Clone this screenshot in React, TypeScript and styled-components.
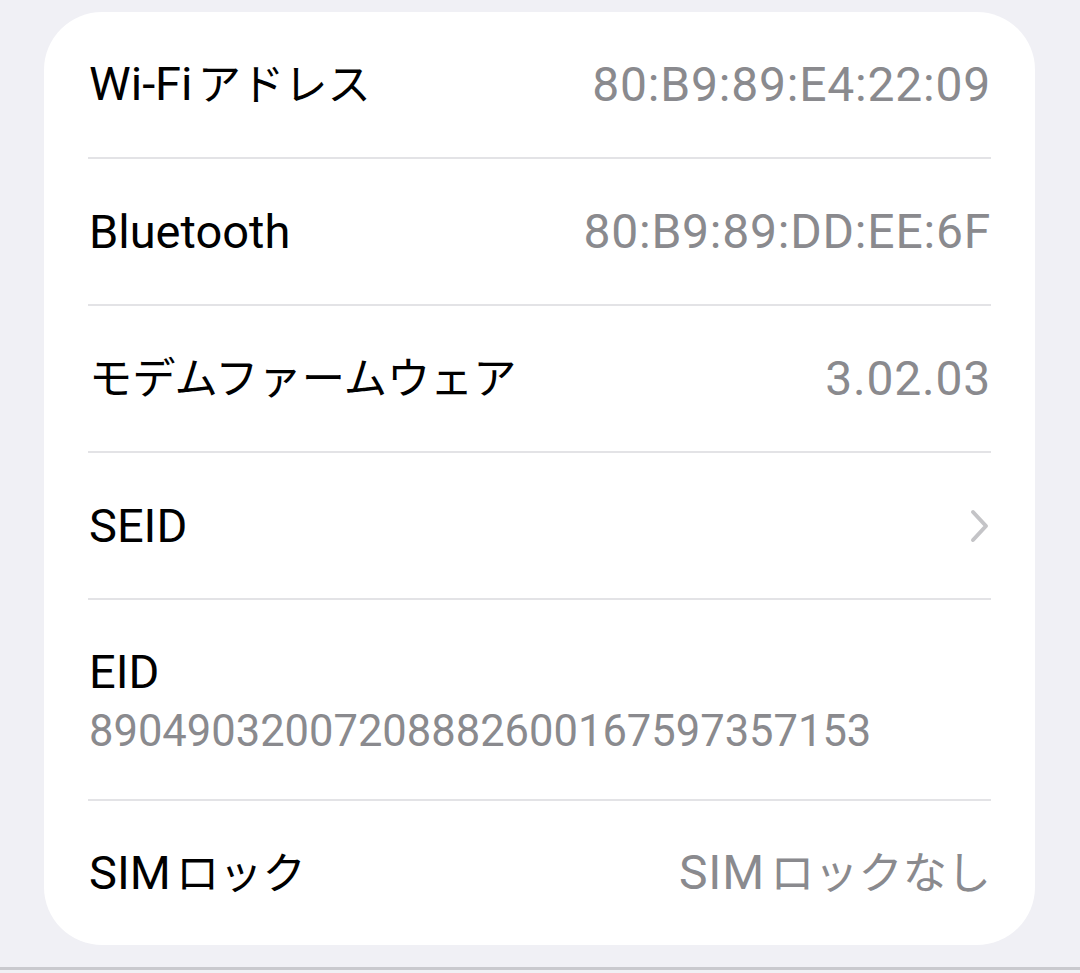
import styled, { createGlobalStyle } from 'styled-components';

const GlobalStyle = createGlobalStyle`
  html, body {
    margin: 0;
    padding: 0;
    background: #f0f0f5;
  }
  body {
    font-family: Roboto, 'Noto Sans CJK JP', sans-serif;
    -webkit-font-smoothing: antialiased;
  }
`;

interface InfoRow {
  label: string;
  value?: string;
  stacked?: boolean;
  chevron?: boolean;
}

const rows: InfoRow[] = [
  { label: 'Wi-Fiアドレス', value: '80:B9:89:E4:22:09' },
  { label: 'Bluetooth', value: '80:B9:89:DD:EE:6F' },
  { label: 'モデムファームウェア', value: '3.02.03' },
  { label: 'SEID', chevron: true },
  { label: 'EID', value: '89049032007208882600167597357153', stacked: true },
  { label: 'SIMロック', value: 'SIMロックなし' },
];

const KANA = /[\u3040-\u30ff\u4e00-\u9fff]/;

// kana set a little smaller than latin, like the system font does
const withKana = (text: string) => {
  const parts = text.split(/([\u3040-\u30ff\u4e00-\u9fff]+)/);
  return parts.map((part, i) =>
    KANA.test(part) ? (
      <Kana key={i} $afterLatin={i > 0 && parts[i - 1] !== ''}>
        {part}
      </Kana>
    ) : (
      part
    )
  );
};

const Chevron = () => (
  <svg width="22" height="36" viewBox="0 0 22 36" fill="none">
    <path
      d="M4 4 L17 18 L4 32"
      stroke="#c4c4c7"
      strokeWidth="4"
      strokeLinecap="round"
      strokeLinejoin="round"
    />
  </svg>
);

export default function App() {
  return (
    <Page>
      <GlobalStyle />
      <Card>
        {rows.map((row, i) => (
          <Row key={row.label} $stacked={row.stacked} $last={i === rows.length - 1}>
            <Label>{withKana(row.label)}</Label>
            {row.value && <Value $stacked={row.stacked}>{withKana(row.value)}</Value>}
            {row.chevron && <Chevron />}
          </Row>
        ))}
      </Card>
    </Page>
  );
}

const Page = styled.div`
  width: 1080px;
  height: 970px;
  box-sizing: border-box;
  padding: 12px 45px 0 44px;
  background: #f0f0f5;
  border-bottom: 3px solid #c9c9ce;
`;

const Card = styled.div`
  background: #ffffff;
  border-radius: 58px;
  padding: 0 44px;
  height: 933px;
  box-sizing: border-box;
`;

const Row = styled.div<{ $stacked?: boolean; $last?: boolean }>`
  display: flex;
  flex-direction: ${(p) => (p.$stacked ? 'column' : 'row')};
  justify-content: ${(p) => (p.$stacked ? 'center' : 'space-between')};
  align-items: ${(p) => (p.$stacked ? 'flex-start' : 'center')};
  gap: ${(p) => (p.$stacked ? '8px' : '0')};
  height: ${(p) => (p.$stacked ? '199px' : '145px')};
  border-bottom: ${(p) => (p.$last ? 'none' : '2px solid #e3e3e6')};
  padding-left: 1px;
`;

const Label = styled.span`
  font-size: 47px;
  color: #000000;
  line-height: 56px;
`;

const Value = styled.span<{ $stacked?: boolean }>`
  font-size: ${(p) => (p.$stacked ? '43.5px' : '48px')};
  letter-spacing: ${(p) => (p.$stacked ? '0' : '0.8px')};
  color: #8a8a8e;
  line-height: ${(p) => (p.$stacked ? '48px' : '56px')};
`;

const Kana = styled.span<{ $afterLatin?: boolean }>`
  font-size: 0.92em;
  letter-spacing: 0;
  margin-left: ${(p) => (p.$afterLatin ? '0.12em' : '0')};
`;
